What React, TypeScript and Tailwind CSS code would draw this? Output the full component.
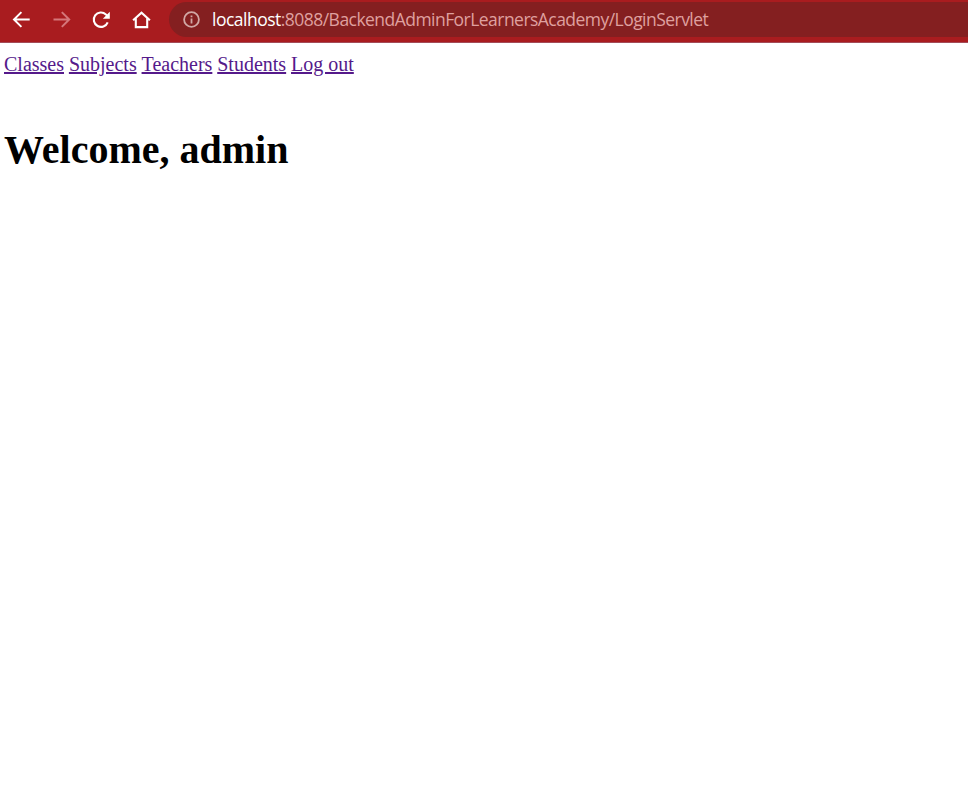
const links = ["Classes", "Subjects", "Teachers", "Students", "Log out"];

function BrowserBar() {
  return (
    <header className="flex h-[43px] items-start border-b border-[#a34c58] bg-[#a91c1f] text-white">
      <nav className="flex h-[39px] items-center gap-4 pl-[9px]">
        <svg width="24" height="24" viewBox="0 0 24 24" fill="none" stroke="currentColor" strokeWidth="2">
          <path d="M20.7 11.5H5.4M12.4 4.1L5 11.5l7.4 7.4" />
        </svg>
        <svg className="text-[#d5777a]" width="24" height="24" viewBox="0 0 24 24" fill="none" stroke="currentColor" strokeWidth="2">
          <path d="M4.5 11.5H19.8M12.8 4.1l7.4 7.4-7.4 7.4" />
        </svg>
        <svg width="24" height="24" viewBox="0 0 24 24">
          <path d="M18.7 14.3a7.2 7.2 0 1 1-1.8-7.9l1.2 1.3" fill="none" stroke="currentColor" strokeWidth="2.1" />
          <path d="M20.8 3.8v7h-7z" fill="currentColor" />
        </svg>
        <svg width="24" height="24" viewBox="0 0 24 24" fill="none" stroke="currentColor" strokeWidth="2.1">
          <path d="M4.1 12.2l8.4-7.5 8.4 7.5M6.8 10.5v8.6h11.4v-8.6" />
        </svg>
      </nav>
      <div className="mt-[2px] ml-4 flex h-[35px] flex-1 items-center rounded-l-full bg-[#841f20] pl-[14px]">
        <svg className="text-[#d1a7a4]" width="17" height="17" viewBox="0 0 17 17" fill="none" stroke="currentColor" strokeWidth="1.8">
          <circle cx="8.5" cy="8.5" r="7.4" />
          <path d="M8.5 7.6v4.8M8.5 4.4v1.9" />
        </svg>
        <div className="mb-[2px] ml-[12px] flex font-['Open_Sans',sans-serif] text-[17.5px] leading-[24px] whitespace-nowrap text-[#dfa09f]">
          <span className="tracking-[-0.5px] text-white">localhost</span>
          <span className="tracking-[-0.54px]">:8088/BackendAdminForLearnersAcademy/LoginServlet</span>
        </div>
      </div>
    </header>
  );
}

export default function App() {
  return (
    <div className="min-h-screen bg-white font-['Liberation_Serif',serif]">
      <BrowserBar />
      <main className="px-1 pt-[10px]">
        <nav className="flex gap-[4.9px] text-[20px] leading-[23px] text-[#551a8b]">
          {links.map((label) => (
            <a key={label} href="#" className="underline">{label}</a>
          ))}
        </nav>
        <h1 className="mt-[51px] text-[40px] leading-[46px] font-bold text-black">Welcome, admin</h1>
      </main>
    </div>
  );
}
